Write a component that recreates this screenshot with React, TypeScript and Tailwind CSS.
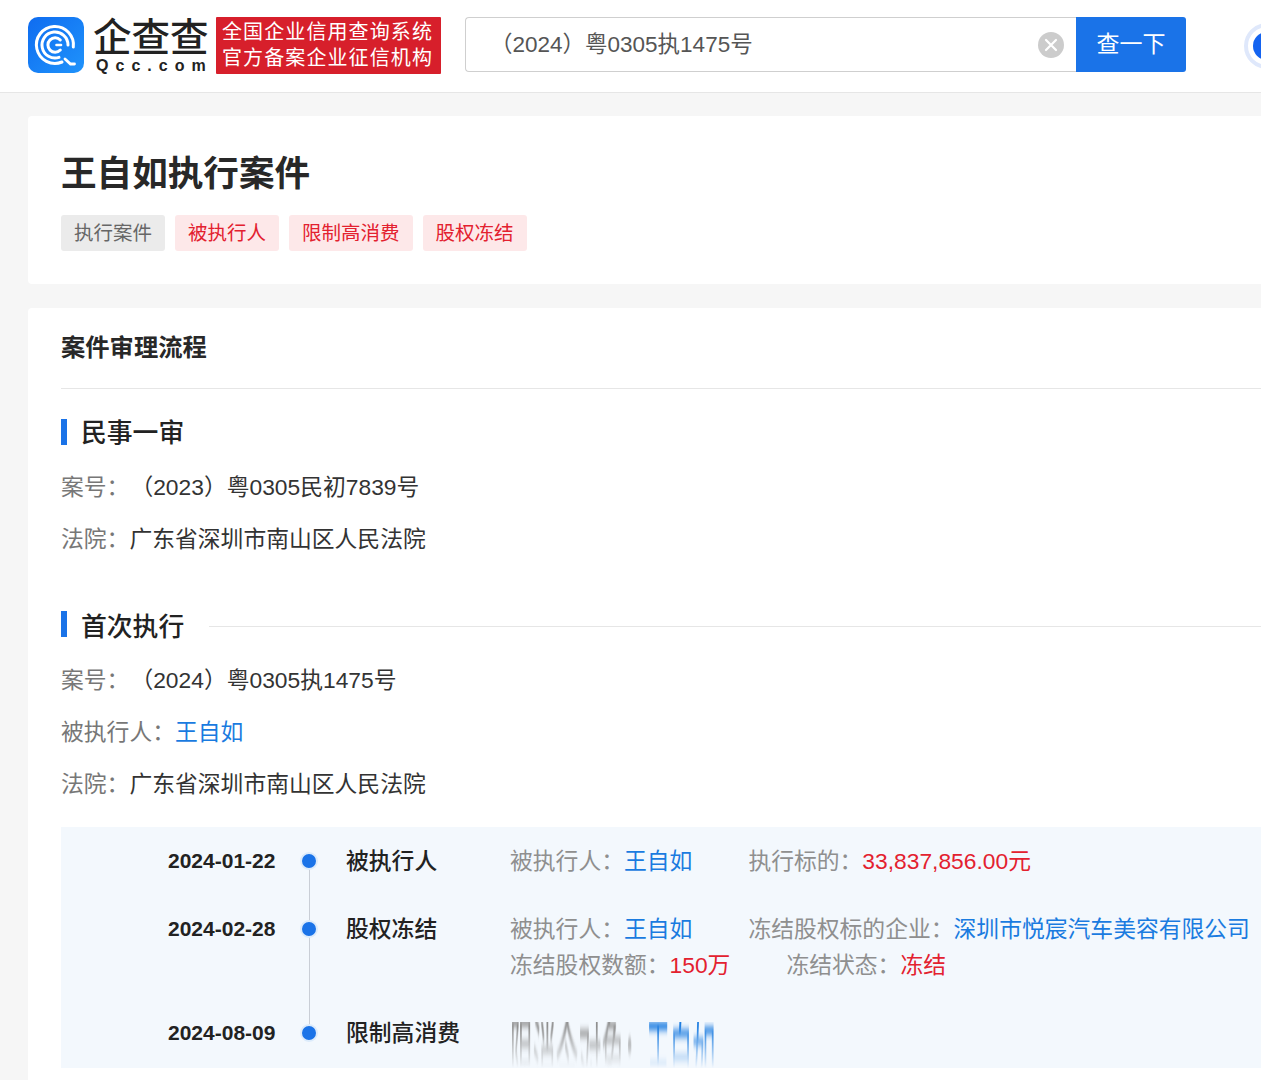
import React from 'react';

const FONT = '[font-family:"Liberation_Sans","Noto_Sans_CJK_SC",sans-serif]';

const TAGS = [
  { text: '执行案件', cls: 'bg-[#ebebeb] text-[#666]' },
  { text: '被执行人', cls: 'bg-[#fde8e9] text-[#e3212f]' },
  { text: '限制高消费', cls: 'bg-[#fde8e9] text-[#e3212f]' },
  { text: '股权冻结', cls: 'bg-[#fde8e9] text-[#e3212f]' },
];

function QccLogo() {
  return (
    <svg width="56" height="56" viewBox="0 0 56 56" className="shrink-0">
      <defs>
        <linearGradient id="qcc" x1="0" y1="0" x2="1" y2="1">
          <stop offset="0" stopColor="#0f6cf0" />
          <stop offset="1" stopColor="#1f93fb" />
        </linearGradient>
      </defs>
      <rect width="56" height="56" rx="10" fill="url(#qcc)" />
      <g fill="none" stroke="#fff" strokeLinecap="round">
        <path d="M45.3 30A18.5 18.5 0 1 0 34 45" strokeWidth="3" />
        <path d="M40 28A13 13 0 1 0 31 40.4" strokeWidth="3" />
        <path d="M32.3 23A7.2 7.2 0 1 0 32.3 33" strokeWidth="3" />
        <path d="M33 28H28.5" strokeWidth="2.6" />
        <path d="M37 42L42.5 47H46.5" strokeWidth="2.8" />
      </g>
    </svg>
  );
}

function SectionTitle({ text, line, shift }: { text: string; line?: boolean; shift: string }) {
  return (
    <div className="flex items-center h-[26px]">
      <div className="w-[6px] h-[26px] bg-[#1a73e8] shrink-0" />
      <div className={`ml-[14px] text-[25.8px] leading-[26px] font-medium text-[#222] ${shift}`}>{text}</div>
      {line && <div className="ml-[25px] mt-[4px] flex-1 h-px bg-[#e6e6e6]" />}
    </div>
  );
}

function InfoRow({ label, children }: { label: string; children: React.ReactNode }) {
  return (
    <div className="flex items-center h-[52px] text-[22.8px] text-[#333]">
      <span className="text-[#777]">{label}</span>
      {children}
    </div>
  );
}

function Field({ label, children }: { label: string; children: React.ReactNode }) {
  return (
    <div className="h-9 leading-9 whitespace-nowrap">
      <span className="text-[#8f8f8f]">{label}</span>
      {children}
    </div>
  );
}

function Node({ date, title, last, children }: { date: string; title: string; last?: boolean; children: React.ReactNode }) {
  return (
    <div className={`flex ${last ? '' : 'pb-8'}`}>
      <div className="w-[108px] h-9 leading-9 text-[21px] font-bold text-[#222] shrink-0">{date}</div>
      <div className="relative w-[30px] ml-[18px] shrink-0 flex justify-center">
        {!last && <div className="absolute left-[15px] top-[26px] -bottom-[44px] w-px bg-[#c9ced6]" />}
        <div className="relative mt-[9px] w-[18px] h-[18px] rounded-full bg-[#1a73e8] border-2 border-[#dcebfb]" />
      </div>
      <div className="w-[164px] ml-[22px] h-9 leading-9 text-[22.8px] font-medium text-[#222] shrink-0 whitespace-nowrap">{title}</div>
      <div className="w-[760px] flex flex-wrap gap-x-14 text-[22.8px] shrink-0">{children}</div>
    </div>
  );
}

export default function App() {
  return (
    <div className={`${FONT} relative w-full h-[1080px] overflow-hidden bg-[#f6f6f6]`}>
      {/* top bar */}
      <div className="h-[93px] bg-white border-b border-[#e6e6e6] flex items-start pt-[17px] pl-[28px] overflow-hidden">
        <QccLogo />
        <div className="ml-[9px] w-[115px] shrink-0 pt-[2px]">
          <div className="text-[38.5px] leading-[38px] font-medium text-[#222] whitespace-nowrap">企查查</div>
          <div className="text-[16px] leading-[17px] font-bold text-[#222] tracking-[0.44em] whitespace-nowrap pl-[3px]">Qcc.com</div>
        </div>
        <div className="ml-[8px] w-[225px] h-[57px] bg-[#d71f2b] rounded-[1px] text-white text-[20px] leading-[26px] tracking-[1.1px] pt-[2px] pl-[6px] shrink-0 whitespace-nowrap">
          <div>全国企业信用查询系统</div>
          <div>官方备案企业征信机构</div>
        </div>
        <div className="ml-[24px] w-[611px] h-[55px] border border-[#cfcfcf] border-r-0 rounded-l-[4px] flex items-center pl-[24px] pr-[12px] shrink-0">
          <span className="flex-1 text-[22.5px] text-[#555]">（2024）粤0305执1475号</span>
          <span className="w-[26px] h-[26px] rounded-full bg-[#cccccc] flex items-center justify-center">
            <svg width="14" height="14" viewBox="0 0 14 14" stroke="#fff" strokeWidth="2.2" strokeLinecap="round">
              <path d="M2 2L12 12M12 2L2 12" />
            </svg>
          </span>
        </div>
        <div className="w-[110px] h-[55px] bg-[#1a73e8] rounded-r-[3px] text-white text-[23px] flex items-center justify-center shrink-0">查一下</div>
        <div className="ml-[58px] mt-[6px] w-[46px] h-[46px] rounded-full border-[4px] border-[#dfe8fb] flex items-center justify-center shrink-0">
          <div className="w-[28px] h-[28px] rounded-full bg-[#1463f0]" />
        </div>
      </div>

      {/* title card */}
      <div className="mt-[23px] ml-[28px] h-[168px] bg-white rounded-l-[4px] pl-[33px] pt-[35px]">
        <h1 className="text-[35.6px] leading-[46px] font-bold text-[#282828]">王自如执行案件</h1>
        <div className="mt-[18px] flex gap-[10px]">
          {TAGS.map((t) => (
            <span key={t.text} className={`h-9 px-[13px] pt-[1px] rounded-[3px] flex items-center text-[19.5px] ${t.cls}`}>{t.text}</span>
          ))}
        </div>
      </div>

      {/* process card */}
      <div className="mt-[24px] ml-[28px] bg-white rounded-tl-[4px] pl-[33px] h-[772px]">
        <div className="h-[81px] border-b border-[#e6e6e6] flex items-center text-[24.3px] font-bold text-[#282828]">案件审理流程</div>

        <div className="mt-[30px]"><SectionTitle text="民事一审" shift="pt-[2px]" /></div>
        <div className="mt-[16px]">
          <InfoRow label="案号："><span className="ml-[1px]">（2023）粤0305民初7839号</span></InfoRow>
          <InfoRow label="法院："><span>广东省深圳市南山区人民法院</span></InfoRow>
        </div>

        <div className="mt-[46px]"><SectionTitle text="首次执行" line shift="pt-[5px]" /></div>
        <div className="mt-[17px]">
          <InfoRow label="案号："><span className="ml-[1px]">（2024）粤0305执1475号</span></InfoRow>
          <InfoRow label="被执行人："><span className="text-[#1a7be0]">王自如</span></InfoRow>
          <InfoRow label="法院："><span>广东省深圳市南山区人民法院</span></InfoRow>
        </div>

        {/* timeline */}
        <div className="mt-[17px] h-[241px] bg-[#f3f8fd] pl-[107px] pt-4 overflow-hidden">
          <Node date="2024-01-22" title="被执行人">
            <Field label="被执行人："><span className="text-[#1a7be0]">王自如</span></Field>
            <Field label="执行标的："><span className="text-[#e3212f]">33,837,856.00元</span></Field>
          </Node>
          <Node date="2024-02-28" title="股权冻结">
            <Field label="被执行人："><span className="text-[#1a7be0]">王自如</span></Field>
            <Field label="冻结股权标的企业："><span className="text-[#1a7be0]">深圳市悦宸汽车美容有限公司</span></Field>
            <Field label="冻结股权数额："><span className="text-[#e3212f]">150万</span></Field>
            <Field label="冻结状态："><span className="text-[#e3212f]">冻结</span></Field>
          </Node>
          <Node date="2024-08-09" title="限制高消费" last>
            {/* the capture smears this line downward */}
            <div className="h-[46px] mt-[7px] overflow-hidden whitespace-nowrap [mask-image:linear-gradient(to_bottom,black_10%,transparent_100%)]">
              <div className="-mt-[12px] origin-top scale-y-[5] blur-[0.7px] leading-[24px] h-6 text-[#8f8f8f]">
                限消令对象：<span className="text-[#1a7be0]">王自如</span>
              </div>
            </div>
          </Node>
        </div>
      </div>

      {/* faint watermark over the page */}
      <div className="absolute inset-0 pointer-events-none overflow-hidden grid grid-cols-6 gap-y-[100px] pt-[40px] text-[26px] font-bold text-black/[0.018]">
        {Array.from({ length: 42 }).map((_, i) => (
          <span key={i} className="-rotate-45 text-center whitespace-nowrap">88MBPSG</span>
        ))}
      </div>
    </div>
  );
}
